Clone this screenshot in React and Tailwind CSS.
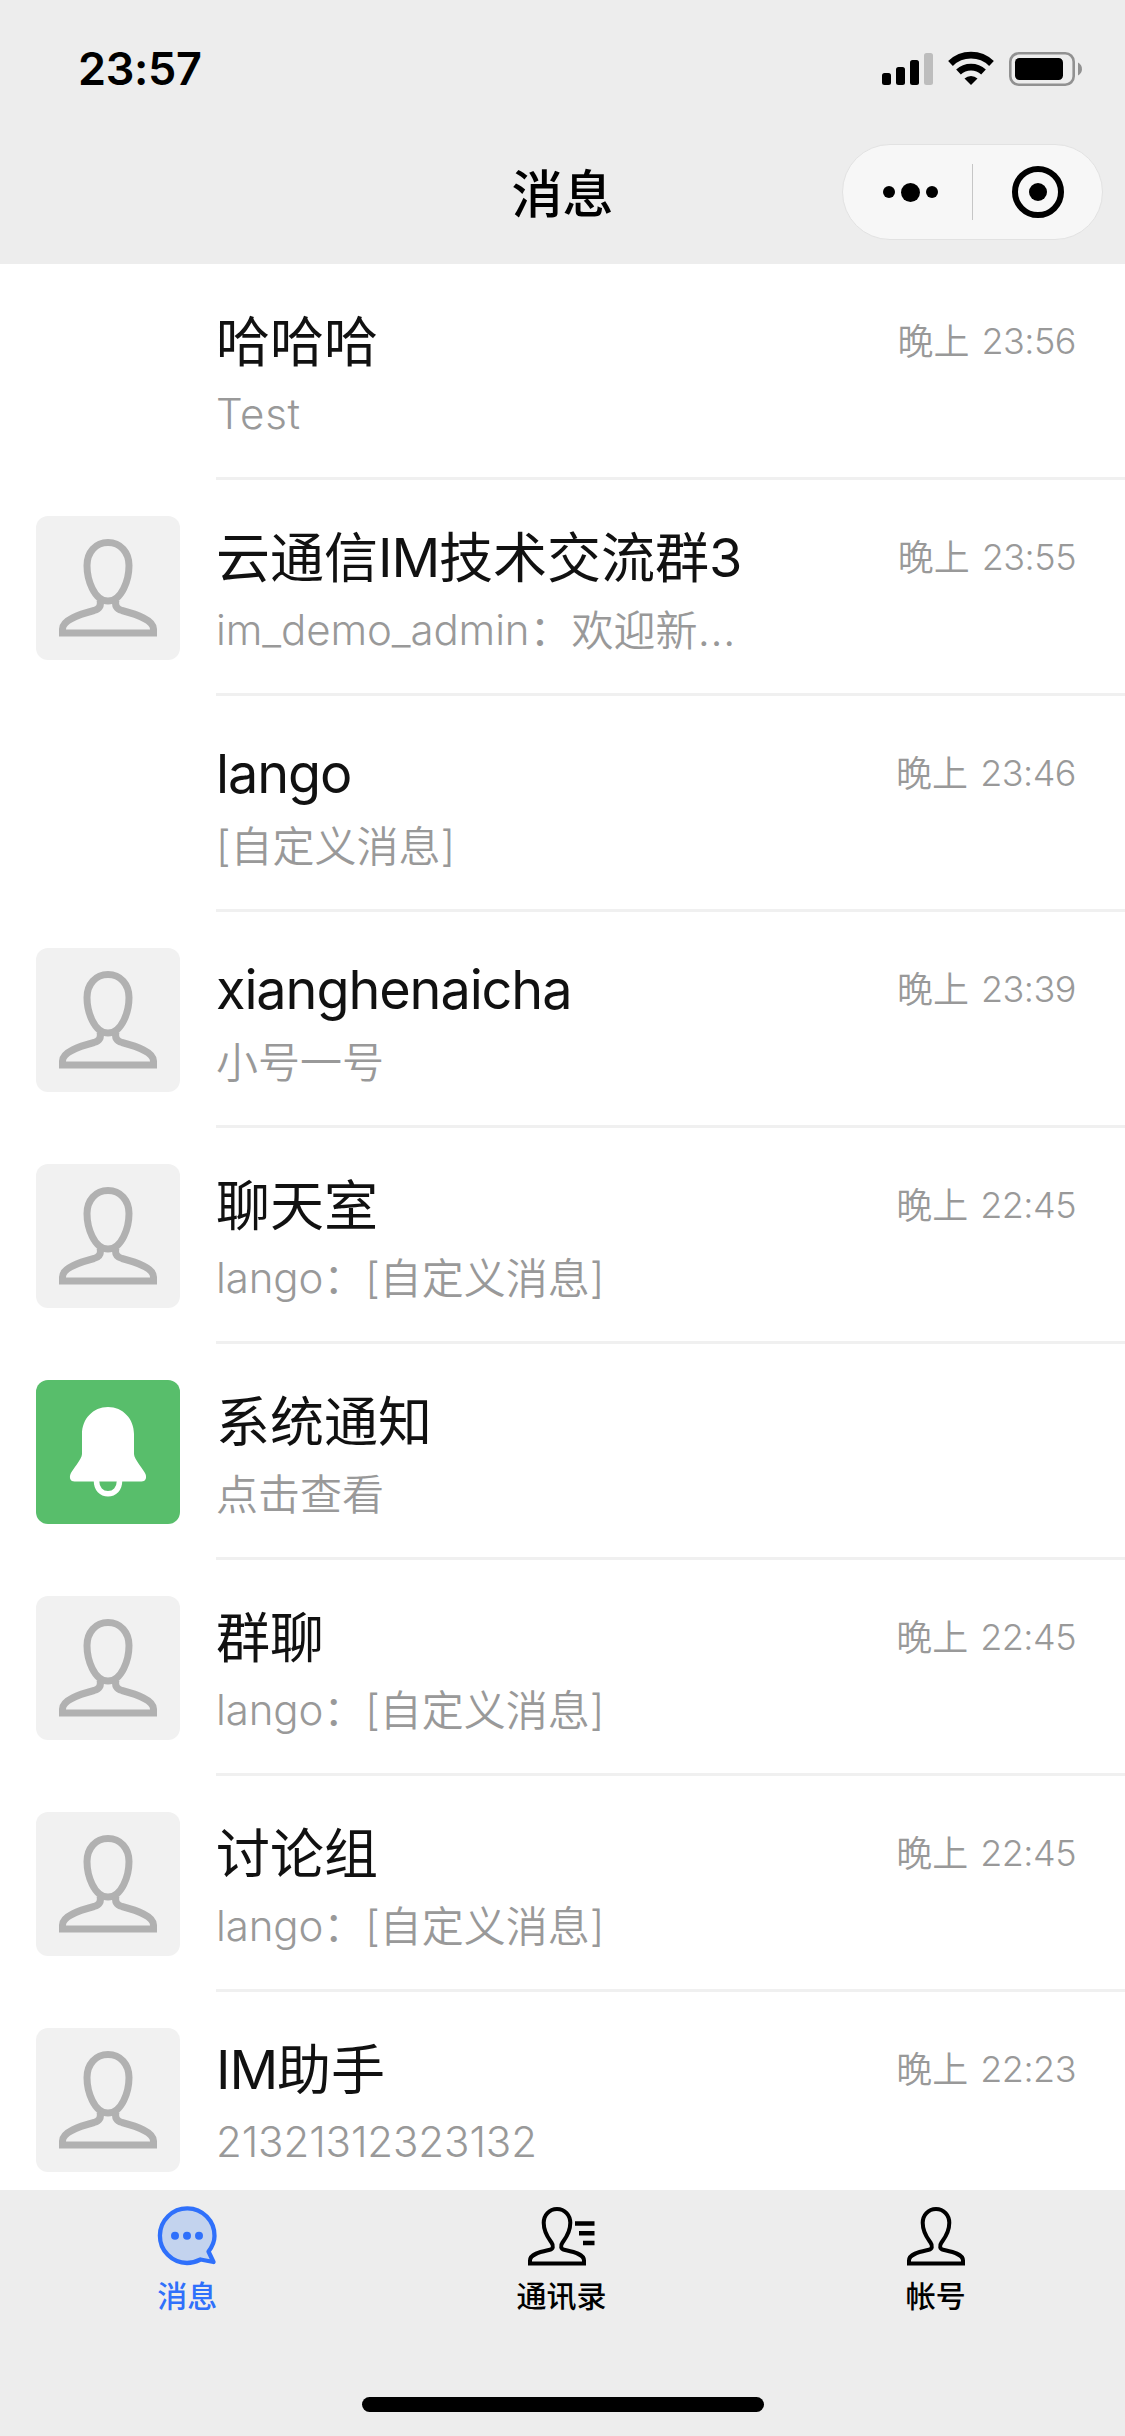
const FONT = { fontFamily: 'Inter, "Noto Sans CJK SC", sans-serif' };

const rows = [
  { title: "哈哈哈", text: "Test", time: "23:56", avatar: "none" },
  { title: "云通信IM技术交流群3", text: "im_demo_admin：欢迎新…", time: "23:55" },
  { title: "lango", text: "[自定义消息]", time: "23:46", avatar: "none" },
  { title: "xianghenaicha", text: "小号一号", time: "23:39" },
  { title: "聊天室", text: "lango：[自定义消息]", time: "22:45" },
  { title: "系统通知", text: "点击查看", avatar: "bell" },
  { title: "群聊", text: "lango：[自定义消息]", time: "22:45" },
  { title: "讨论组", text: "lango：[自定义消息]", time: "22:45" },
  { title: "IM助手", text: "21321312323132", time: "22:23" },
];

function Mixed({ value, latin }) {
  return value
    .split(/([\x20-\x7e]+|…)/)
    .filter(Boolean)
    .map((part, i) => {
      if (part === "…") return <span key={i} className="tracking-[2px] text-[45px] leading-none">{part}</span>;
      return /^[\x20-\x7e]/.test(part) ? (
        <span key={i} className={"align-[1px] leading-none " + latin}>{part}</span>
      ) : (
        <span key={i}>{part}</span>
      );
    });
}

function Avatar({ kind }) {
  if (kind === "none") return <div className="size-36 shrink-0" />;
  if (kind === "bell")
    return (
      <svg viewBox="0 0 144 144" className="size-36 shrink-0 rounded-xl bg-[#58be6b]">
        <path
          d="M72 27c-15 0-26 12-26 27v20c0 5-10 16-11.500 20-1.500 4 0 7.500 4 7.500h67c4 0 5.500-3.500 4-7.500C108 90 98 79 98 74V54c0-15-11-27-26-27Z"
          fill="#fff"
        />
        <path d="M60.500 101c0 8 5 12.800 11.500 12.800S83.500 109 83.500 101" fill="none" stroke="#fff" strokeWidth="5.500" />
      </svg>
    );
  return (
    <svg viewBox="0 0 144 144" className="size-36 shrink-0 rounded-xl bg-[#f1f1f1]" fill="none" stroke="#b1b1b1" strokeWidth="7">
      <path d="M72 26.500c-12.500 0-21 10-21 23 0 14 7 35.500 21 35.500s21-21.500 21-35.500c0-13-8.500-23-21-23Z" />
      <path d="M64 84c1.500 6-1 9-6 10.500C43 98.500 26.500 104 26.500 113v4h91v-4c0-9-16.500-14.500-31.500-18.500-5-1.500-7.500-4.500-6-10.500" />
    </svg>
  );
}

function StatusIcons() {
  return (
    <svg width="204" height="40" viewBox="880 50 204 40" className="ml-auto block">
      <g>
        <rect x="882" y="73" width="9" height="12" rx="2.500" />
        <rect x="896" y="67" width="9" height="18" rx="2.500" />
        <rect x="910" y="60" width="9" height="25" rx="2.500" />
        <rect x="924" y="53" width="9" height="32" rx="2.500" fill="#bdbdbd" />
      </g>
      <g fill="none" stroke="#000" strokeWidth="6.800">
        <path d="M950.500 63.500a29.500 29.500 0 0 1 41 0" />
        <path d="M958.500 72a18.200 18.200 0 0 1 25 0" />
      </g>
      <path d="M964.500 78.500a9.500 9.500 0 0 1 13 0L971 85Z" />
      <rect x="1010.300" y="53.300" width="63.400" height="31.400" rx="8.500" fill="none" stroke="#919191" strokeWidth="2.600" />
      <rect x="1015" y="58" width="48" height="22" rx="4.500" />
      <path d="M1078 62.500c5.300 2.500 5.300 10.500 0 13Z" fill="#919191" />
    </svg>
  );
}

const person =
  "M29 2c-7.800 0-13.300 6.200-13.300 13.800 0 10 4.800 15.500 7.800 19.700 2.500 3.500 1.500 6.500-1.700 7.200C14 44.500 2 46.500 2 53.500v3h54v-3c0-7-12-9-19.800-10.800-3.200-.7-4.200-3.700-1.700-7.200 3-4.200 7.800-9.700 7.800-19.700C42.300 8.200 36.800 2 29 2Z";

function TabIcon({ kind }) {
  if (kind === "chat")
    return (
      <svg width="60" height="60" viewBox="0 0 60 60">
        <path
          d="M51.500 45.500C55 41 57.500 36 57.500 30A27.300 27.300 0 1 0 30 57c5 0 9-1.200 13.500-3.500l13 2.500Z"
          fill="#c3d3ee" stroke="#2f70fb" strokeWidth="4.300" strokeLinejoin="round"
        />
        <g fill="#2f70fb">
          <circle cx="18" cy="29.700" r="4" />
          <circle cx="30" cy="29.700" r="4" />
          <circle cx="42" cy="29.700" r="4" />
        </g>
      </svg>
    );
  return (
    <svg width={kind === "contacts" ? 67 : 58} height="60" viewBox={kind === "contacts" ? "0 -1 67 60" : "0 -1 58 60"}>
      <path d={person} fill="none" stroke="#000" strokeWidth="4" />
      {kind === "contacts" && <path d="M47 16.500h19.500M51 26.300h15.500M55 36h11.500" stroke="#000" strokeWidth="4.400" />}
    </svg>
  );
}

export default function App() {
  return (
    <div className="flex h-[2436px] w-[1125px] flex-col overflow-hidden bg-white" style={FONT}>
      <header className="h-[264px] shrink-0 bg-[#ededed]">
        <div className="flex h-[132px] items-start pl-[78px] pr-[41px] pt-[50px]">
          <span className="-mt-[9px] text-[45px] font-semibold leading-[56px] tracking-[-0.3px]">23:57</span>
          <StatusIcons />
        </div>
        <div className="grid h-[132px] grid-cols-[1fr_auto_1fr] items-start px-[22px]">
          <span />
          <h1 className="mt-[27px] text-[51px] font-medium leading-[72px]">消息</h1>
          <div className="mt-[12px] flex h-24 w-[261px] items-center justify-self-end rounded-full border border-[#e2e2e2] bg-[#f7f7f7]">
            <div className="flex w-[129px] items-center justify-center gap-[6px] pl-[6px]">
              <i className="size-3 rounded-full bg-black" />
              <i className="size-[19px] rounded-full bg-black" />
              <i className="size-3 rounded-full bg-black" />
            </div>
            <div className="h-14 w-px bg-[#c6c6c6]" />
            <div className="flex flex-1 items-center justify-center">
              <div className="flex size-[52px] items-center justify-center rounded-full border-[6px] border-black">
                <i className="size-[18px] rounded-full bg-black" />
              </div>
            </div>
          </div>
        </div>
      </header>

      <main className="h-[1926px] shrink-0 overflow-hidden">
        {rows.map((r) => (
          <div key={r.title} className="flex h-[216px] gap-9 pl-9 pt-9">
            <Avatar kind={r.avatar} />
            <div className="-mt-9 flex flex-1 items-start justify-between border-b-[3px] border-[#f0f0f0] pr-12 whitespace-nowrap">
              <div className="pt-[43px]">
                <div className="h-[72px] text-[54px] leading-[72px] text-[#111]">
                  <Mixed value={r.title} latin="tracking-[-1.1px]" />
                </div>
                <div className="mt-[6px] h-[60px] text-[42px] font-[350] leading-[60px] text-[#999]">
                  <Mixed value={r.text} latin={r.text === "Test" ? "tracking-[0.7px]" : "tracking-[-0.1px]"} />
                </div>
              </div>
              {r.time && (
                <div className="flex gap-[12px] pt-[53px] text-[36px] font-[350] leading-[50px] text-[#999]">
                  <span>晚上</span>
                  <span className="-mt-px pr-[1px] tracking-[-0.5px]">{r.time}</span>
                </div>
              )}
            </div>
          </div>
        ))}
      </main>

      <nav className="flex h-[246px] shrink-0 flex-col bg-[#ededed]">
        <div className="grid grid-cols-3 pr-[2px]">
          {[
            ["chat", "消息", "text-[#2f70fb]"],
            ["contacts", "通讯录", "text-black"],
            ["account", "帐号", "text-black"],
          ].map(([kind, label, color]) => (
            <div key={kind} className="flex flex-col items-center pt-4">
              <TabIcon kind={kind} />
              <span className={"mt-2 text-[30px] leading-[44px] font-medium " + color}>{label}</span>
            </div>
          ))}
        </div>
        <div className="mx-auto mb-6 mt-auto h-[15px] w-[402px] rounded-full bg-black" />
      </nav>
    </div>
  );
}
